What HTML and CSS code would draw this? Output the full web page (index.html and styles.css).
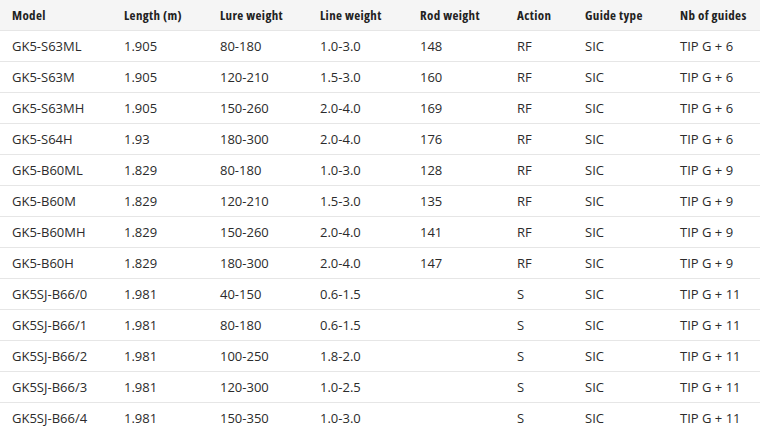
FILE: index.html
```html
<!DOCTYPE html>
<html>
<head>
<meta charset="utf-8">
<link rel="stylesheet" href="styles.css">
</head>
<body>
<table class="specs">
  <colgroup>
    <col class="c-model"><col class="c-length"><col class="c-lure"><col class="c-line"><col class="c-rod"><col class="c-action"><col class="c-guide"><col class="c-nb">
  </colgroup>
  <thead>
    <tr><th>Model</th><th>Length (m)</th><th>Lure weight</th><th>Line weight</th><th>Rod weight</th><th>Action</th><th>Guide type</th><th>Nb of guides</th></tr>
  </thead>
  <tbody>
    <tr><td>GK5-S63ML</td><td>1.905</td><td>80-180</td><td>1.0-3.0</td><td>148</td><td>RF</td><td>SIC</td><td>TIP G + 6</td></tr>
    <tr><td>GK5-S63M</td><td>1.905</td><td>120-210</td><td>1.5-3.0</td><td>160</td><td>RF</td><td>SIC</td><td>TIP G + 6</td></tr>
    <tr><td>GK5-S63MH</td><td>1.905</td><td>150-260</td><td>2.0-4.0</td><td>169</td><td>RF</td><td>SIC</td><td>TIP G + 6</td></tr>
    <tr><td>GK5-S64H</td><td>1.93</td><td>180-300</td><td>2.0-4.0</td><td>176</td><td>RF</td><td>SIC</td><td>TIP G + 6</td></tr>
    <tr><td>GK5-B60ML</td><td>1.829</td><td>80-180</td><td>1.0-3.0</td><td>128</td><td>RF</td><td>SIC</td><td>TIP G + 9</td></tr>
    <tr><td>GK5-B60M</td><td>1.829</td><td>120-210</td><td>1.5-3.0</td><td>135</td><td>RF</td><td>SIC</td><td>TIP G + 9</td></tr>
    <tr><td>GK5-B60MH</td><td>1.829</td><td>150-260</td><td>2.0-4.0</td><td>141</td><td>RF</td><td>SIC</td><td>TIP G + 9</td></tr>
    <tr><td>GK5-B60H</td><td>1.829</td><td>180-300</td><td>2.0-4.0</td><td>147</td><td>RF</td><td>SIC</td><td>TIP G + 9</td></tr>
    <tr><td>GK5SJ-B66/0</td><td>1.981</td><td>40-150</td><td>0.6-1.5</td><td></td><td>S</td><td>SIC</td><td>TIP G + 11</td></tr>
    <tr><td>GK5SJ-B66/1</td><td>1.981</td><td>80-180</td><td>0.6-1.5</td><td></td><td>S</td><td>SIC</td><td>TIP G + 11</td></tr>
    <tr><td>GK5SJ-B66/2</td><td>1.981</td><td>100-250</td><td>1.8-2.0</td><td></td><td>S</td><td>SIC</td><td>TIP G + 11</td></tr>
    <tr><td>GK5SJ-B66/3</td><td>1.981</td><td>120-300</td><td>1.0-2.5</td><td></td><td>S</td><td>SIC</td><td>TIP G + 11</td></tr>
    <tr><td>GK5SJ-B66/4</td><td>1.981</td><td>150-350</td><td>1.0-3.0</td><td></td><td>S</td><td>SIC</td><td>TIP G + 11</td></tr>
  </tbody>
</table>
</body>
</html>
```
FILE: styles.css
```css
html, body {
  margin: 0;
  padding: 0;
  background: #ffffff;
  overflow: hidden;
}
body {
  width: 760px;
  height: 432px;
  font-family: "Open Sans", "DejaVu Sans Condensed", sans-serif;
  font-stretch: 88%;
  font-size: 13px;
  color: #2b2b2b;
}
.specs {
  width: 760px;
  border-collapse: collapse;
  table-layout: fixed;
}
.c-model { width: 112px; }
.c-length { width: 96px; }
.c-lure { width: 100px; }
.c-line { width: 100px; }
.c-rod { width: 97px; }
.c-action { width: 68px; }
.c-guide { width: 95px; }
.c-nb { width: 92px; }
.specs th, .specs td {
  height: 30px;
  padding: 0 0 0 12px;
  text-align: left;
  vertical-align: middle;
  border-bottom: 1px solid #e6e6e6;
  white-space: nowrap;
  line-height: 16px;
}
.specs th {
  background: #f5f5f5;
  font-weight: bold;
  font-stretch: 75%;
  letter-spacing: 0.35px;
  color: #222222;
}
```
